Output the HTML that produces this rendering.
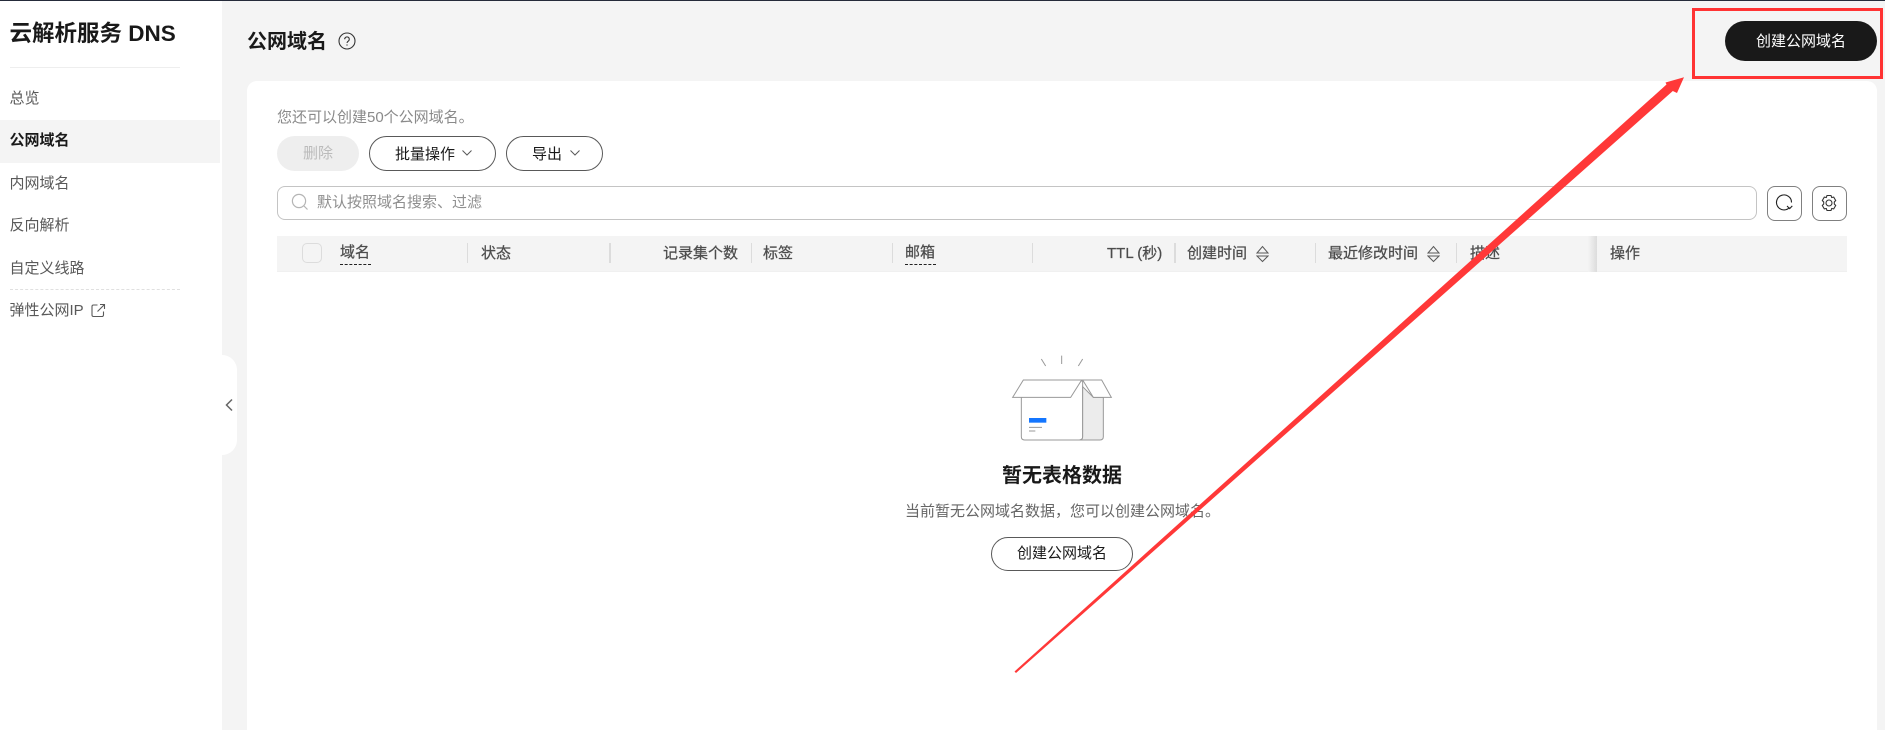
<!DOCTYPE html>
<html lang="zh-CN"><head><meta charset="utf-8"><title>云解析服务 DNS</title>
<style>
html,body{margin:0;padding:0;width:1885px;height:730px;overflow:hidden;background:#f4f4f4}
body{position:relative;font-family:"Liberation Sans","Noto Sans CJK SC",sans-serif;font-size:15px;color:#191919}
div,svg,span{position:absolute;box-sizing:border-box}
.t{line-height:20px;white-space:nowrap}
.n{color:#595959;left:9.5px}
.h{color:#4d4d4d;-webkit-text-stroke:0.25px #4d4d4d;top:244px}
.d{top:243px;height:20px;width:1px;background:#dcdcdc}
.b{border:1px solid #595959;border-radius:18px;background:#fff;text-align:center;line-height:35px;white-space:nowrap}
</style></head><body>
<div style="left:0;top:0;width:1885px;height:1px;background:#252b3a"></div>
<div style="left:0;top:1px;width:222px;height:729px;background:#fff"></div>
<div class="t" style="left:9.5px;top:24px;font-size:22.5px;font-weight:700;color:#191919">云解析服务 DNS</div>
<div style="left:10px;top:67px;width:170px;height:1px;background:#eee"></div>
<div class="t n" style="top:89px">总览</div>
<div style="left:0;top:120px;width:220px;height:43px;background:#f4f4f4"></div>
<div class="t n" style="top:131px;color:#191919;font-weight:700">公网域名</div>
<div class="t n" style="top:174px">内网域名</div>
<div class="t n" style="top:216px">反向解析</div>
<div class="t n" style="top:259px">自定义线路</div>
<div style="left:10px;top:289px;width:170px;height:0;border-top:1px dashed #e0e0e0"></div>
<div class="t n" style="top:301px">弹性公网IP</div>
<svg style="left:91px;top:303px" width="15" height="15" viewBox="0 0 15 15" fill="none" stroke="#595959" stroke-width="1.1"><path d="M6.5 2H2.500a1.500 1.500 0 0 0-1.500 1.500v8.500a1.500 1.500 0 0 0 1.500 1.500h8.500a1.500 1.500 0 0 0 1.500-1.500V8.500M6.500 8.500L13 2M9 1.500h4.500V6"/></svg>
<div style="left:222px;top:355px;width:15px;height:100px;background:#fff;border-radius:0 15px 15px 0"></div>
<svg style="left:224px;top:398px" width="11" height="14" viewBox="0 0 11 14" fill="none" stroke="#666" stroke-width="1.500"><path d="M8 1.500L2.500 7L8 12.500"/></svg>

<div class="t" style="left:247px;top:32px;font-size:20px;font-weight:700;color:#191919">公网域名</div>
<svg style="left:338px;top:32px" width="18" height="18" viewBox="0 0 18 18" fill="none" stroke="#333" stroke-width="1.100"><circle cx="9" cy="9" r="8"/><path d="M6.700 7.200a2.300 2.300 0 1 1 3.600 1.900c-.8.500-1.300.9-1.300 1.900"/><path d="M9 12.400v1.200"/></svg>

<div style="left:1725px;top:21px;width:152px;height:40px;border-radius:20px;background:#191919;color:#fff;text-align:center;line-height:41px">创建公网域名</div>
<div style="left:247px;top:81px;width:1630px;height:660px;background:#fff;border-radius:10px"></div>

<div class="t" style="left:277px;top:108px;color:#8a8a8a">您还可以创建50个公网域名。</div>
<div style="left:277px;top:136px;width:82px;height:35px;border-radius:18px;background:#eee;color:#bbb;text-align:center;line-height:36px">删除</div>
<div class="b" style="left:369px;top:136px;width:127px;height:35px;text-align:left;padding-left:25px">批量操作</div>
<svg style="left:461px;top:149px" width="12" height="8" viewBox="0 0 12 8" fill="none" stroke="#595959" stroke-width="1"><path d="M1.500 1.500L6 6l4.500-4.500"/></svg>
<div class="b" style="left:506px;top:136px;width:97px;height:35px;text-align:left;padding-left:25px">导出</div>
<svg style="left:569px;top:149px" width="12" height="8" viewBox="0 0 12 8" fill="none" stroke="#595959" stroke-width="1"><path d="M1.500 1.500L6 6l4.500-4.500"/></svg>

<div style="left:277px;top:186px;width:1480px;height:34px;border:1px solid #c4c4c4;border-radius:8px;background:#fff"></div>
<svg style="left:291px;top:193px" width="18" height="18" viewBox="0 0 18 18" fill="none" stroke="#b5b5b5" stroke-width="1.200"><circle cx="8" cy="8" r="6.600"/><path d="M13 13l3.500 3.500"/></svg>
<div class="t" style="left:317px;top:193px;color:#8f8f8f">默认按照域名搜索、过滤</div>
<div style="left:1767px;top:186px;width:35px;height:35px;border:1px solid #808080;border-radius:8px;background:#fff"></div>
<svg style="left:1774px;top:193px" width="20" height="20" viewBox="0 0 20 20" fill="none" stroke="#222" stroke-width="1.100"><path d="M15.500 14.500A7.500 7.500 0 1 1 17.500 9.500"/><path d="M13 13l2.700 2.600 2.600-2.700"/></svg>
<div style="left:1812px;top:186px;width:35px;height:35px;border:1px solid #808080;border-radius:8px;background:#fff"></div>
<svg style="left:1820px;top:194px" width="18" height="18" viewBox="0 0 18 18" fill="none" stroke="#333" stroke-width="1.100"><path d="M7 1.500h4l.7 2 2-.4 2 3.400-1.400 1.500 0 2 1.400 1.500-2 3.400-2-.4-.7 2H7l-.7-2-2 .4-2-3.400L3.700 10V8L2.300 6.500l2-3.400 2 .4z"/><circle cx="9" cy="9" r="3"/></svg>

<div style="left:277px;top:236px;width:1570px;height:36px;background:#f4f4f4;border-bottom:1px solid #f0f0f0"></div>
<div style="left:302px;top:243px;width:20px;height:20px;border:1px solid #dcdcdc;border-radius:5px;background:#f4f4f4"></div>
<div class="t h" style="left:340px;top:243px">域名</div>
<div style="left:340px;top:264px;width:31px;height:0;border-top:1px dashed #222"></div>
<div class="d" style="left:467px"></div>
<div class="t h" style="left:481px">状态</div>
<div class="d" style="left:609px;width:2px"></div>
<div class="t h" style="left:663px">记录集个数</div>
<div class="d" style="left:751px"></div>
<div class="t h" style="left:763px">标签</div>
<div class="d" style="left:892px"></div>
<div class="t h" style="left:905px;top:243px">邮箱</div>
<div style="left:905px;top:264px;width:31px;height:0;border-top:1px dashed #222"></div>
<div class="d" style="left:1032px"></div>
<div class="t h" style="left:1107px">TTL (秒)</div>
<div class="d" style="left:1174px;width:2px"></div>
<div class="t h" style="left:1187px">创建时间</div>
<svg style="left:1256px;top:245px" width="13" height="18" viewBox="0 0 13 18" fill="none" stroke="#595959" stroke-width="1"><path d="M1 8L6.500 1.500 12 8zM1 11h11L6.500 16.500z"/></svg>
<div class="d" style="left:1315px"></div>
<div class="t h" style="left:1328px">最近修改时间</div>
<svg style="left:1427px;top:245px" width="13" height="18" viewBox="0 0 13 18" fill="none" stroke="#595959" stroke-width="1"><path d="M1 8L6.500 1.500 12 8zM1 11h11L6.500 16.500z"/></svg>
<div class="d" style="left:1456px"></div>
<div class="t h" style="left:1470px">描述</div>
<div style="left:1588px;top:236px;width:9px;height:36px;background:linear-gradient(to right,#f4f4f4,#dcdcdc)"></div>
<div class="t h" style="left:1610px">操作</div>

<svg style="left:880px;top:340px" width="360" height="120" viewBox="0 0 1080 360" fill="none" stroke="#999" stroke-width="3">
<path d="M484 57l13 21M545 47v25M608 57l-13 21"/>
<path d="M424 172v118q0 10 10 10h164q10 0 10-10V122z" fill="#fff"/>
<path d="M608 140L640 172h30v118q0 10-10 10h-62q10 0 10-10z" fill="#ececec"/>
<path d="M430 120h175l-33 52H398z" fill="#fff"/>
<path d="M608 120h57l29 52h-54z" fill="#fff"/>
<rect x="447" y="234" width="52" height="14" fill="#1476ff" stroke="none"/>
<path d="M447 262h39M447 273h19"/>
</svg>
<div class="t" style="left:962px;width:200px;text-align:center;top:466px;font-size:20px;font-weight:700">暂无表格数据</div>
<div class="t" style="left:905px;top:502px;color:#666">当前暂无公网域名数据，您可以创建公网域名。</div>
<div class="b" style="left:991px;top:537px;width:142px;height:34px;line-height:32px">创建公网域名</div>

<svg style="left:0;top:0" width="1885" height="730" viewBox="0 0 1885 730">
<rect x="1693.500" y="9.500" width="188" height="68" fill="none" stroke="#ff3333" stroke-width="3"/>
<polygon fill="#ff3838" points="1014.500,671.500 1666.500,84.500 1665.500,82.500 1684,77.300 1677,93 1672.800,91 1016,673"/>
</svg>
</body></html>
